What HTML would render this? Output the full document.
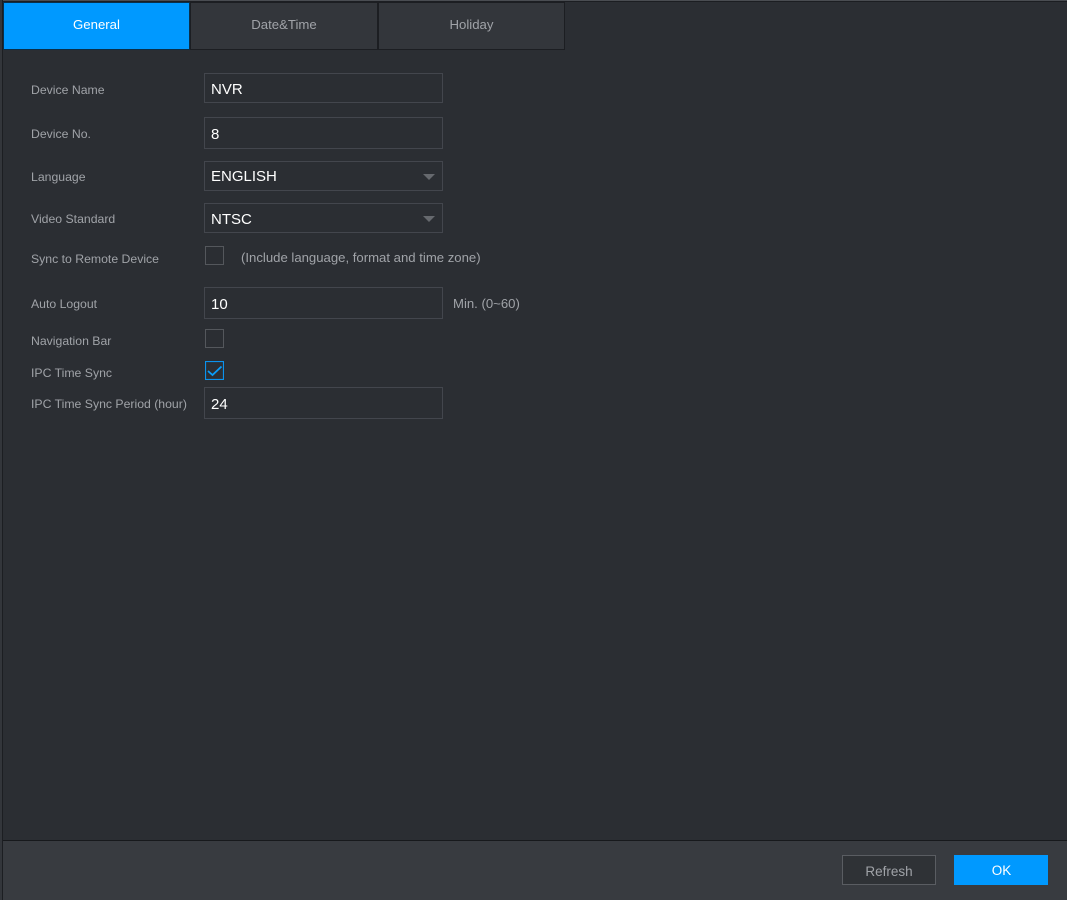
<!DOCTYPE html>
<html>
<head>
<meta charset="utf-8">
<style>
html,body{margin:0;padding:0;width:1067px;height:900px;overflow:hidden;background:#2b2e33;font-family:"Liberation Sans",sans-serif;}
.a{position:absolute;box-sizing:border-box;}
.lbl{position:absolute;left:31px;color:#a0a3a8;font-size:12.25px;line-height:16px;white-space:nowrap;}
.inp{position:absolute;left:204px;width:239px;box-sizing:border-box;border:1px solid #43464d;color:#fff;font-size:15px;padding-left:6px;white-space:nowrap;}
.tab{position:absolute;top:2px;height:48px;box-sizing:border-box;background:#33363b;border:1px solid #1c1e22;color:#a0a3a8;font-size:13.2px;text-align:center;line-height:44px;}
.cb{position:absolute;left:205px;width:19px;height:19px;box-sizing:border-box;border:1px solid #54575c;}
.arr{position:absolute;left:423px;width:0;height:0;border-left:6px solid transparent;border-right:6px solid transparent;border-top:6px solid #66696e;}
</style>
</head>
<body>
<div class="a" style="left:0;top:0;width:1067px;height:1px;background:#4a4d52;"></div>
<div class="a" style="left:0;top:1px;width:1067px;height:1px;background:#1c1e22;"></div>
<div class="a" style="left:0;top:0;width:2px;height:900px;background:#33363b;"></div>
<div class="a" style="left:2px;top:0;width:1px;height:900px;background:#1c1e22;"></div>

<div class="tab" style="left:3px;width:187px;background:#0099ff;color:#fff;border-color:#0a2f4a;">General</div>
<div class="tab" style="left:190px;width:188px;">Date&amp;Time</div>
<div class="tab" style="left:378px;width:187px;">Holiday</div>

<div class="lbl" style="top:82px;">Device Name</div>
<div class="inp" style="top:73px;height:30px;line-height:31px;">NVR</div>

<div class="lbl" style="top:126px;">Device No.</div>
<div class="inp" style="top:117px;height:32px;line-height:33px;">8</div>

<div class="lbl" style="top:169px;">Language</div>
<div class="inp" style="top:161px;height:30px;line-height:30px;">ENGLISH</div>
<div class="arr" style="top:174px;"></div>

<div class="lbl" style="top:211px;">Video Standard</div>
<div class="inp" style="top:203px;height:30px;line-height:31px;">NTSC</div>
<div class="arr" style="top:216px;"></div>

<div class="lbl" style="top:251px;">Sync to Remote Device</div>
<div class="cb" style="top:246px;"></div>
<div class="a" style="left:241px;top:250px;color:#a0a3a8;font-size:13.15px;line-height:16px;white-space:nowrap;">(Include language, format and time zone)</div>

<div class="lbl" style="top:296px;">Auto Logout</div>
<div class="inp" style="top:287px;height:32px;line-height:33px;">10</div>
<div class="a" style="left:453px;top:296px;color:#a0a3a8;font-size:13.15px;line-height:16px;white-space:nowrap;">Min. (0~60)</div>

<div class="lbl" style="top:333px;">Navigation Bar</div>
<div class="cb" style="top:329px;"></div>

<div class="lbl" style="top:365px;">IPC Time Sync</div>
<svg width="19" height="19" style="position:absolute;left:205px;top:361px;"><rect x="0.5" y="0.5" width="18" height="18" fill="none" stroke="#0b93ee" stroke-width="1.2"/><path d="M3 10 L7.5 14 L16.5 5.5" fill="none" stroke="#0a9dfa" stroke-width="1.8"/></svg>

<div class="lbl" style="top:396px;">IPC Time Sync Period (hour)</div>
<div class="inp" style="top:387px;height:32px;line-height:33px;">24</div>

<div class="a" style="left:3px;top:840px;width:1064px;height:60px;background:#383b40;border-top:1px solid #17191c;"></div>
<div class="a" style="left:842px;top:855px;width:94px;height:30px;background:#2f3236;border:1px solid #5a5d62;color:#a0a3a8;font-size:13.5px;text-align:center;line-height:31px;">Refresh</div>
<div class="a" style="left:954px;top:855px;width:94px;height:30px;padding-left:1px;background:#0099ff;color:#fff;font-size:13.5px;text-align:center;line-height:32px;">OK</div>
</body>
</html>
